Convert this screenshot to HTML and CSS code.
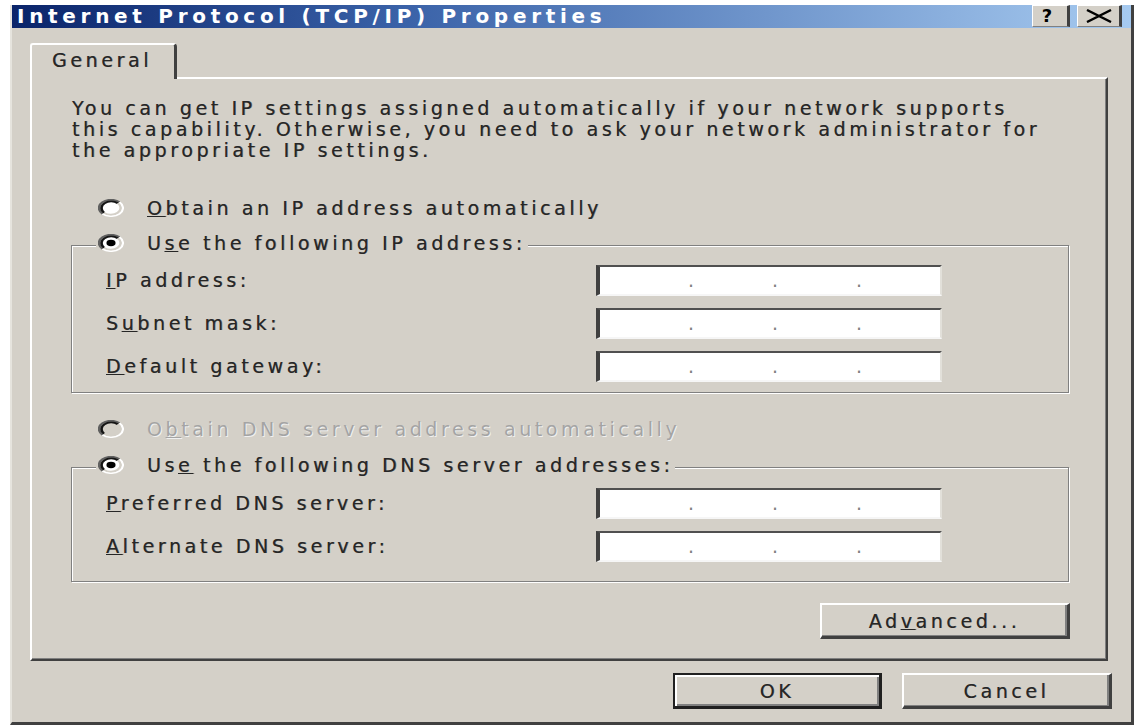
FILE: index.html
```html
<!DOCTYPE html>
<html lang="en">
<head>
<meta charset="utf-8">
<title>Internet Protocol (TCP/IP) Properties</title>
<link rel="stylesheet" href="styles.css">
</head>
<body>
<div class="window">
  <div class="titlebar">
    <span class="title">Internet Protocol (TCP/IP) Properties</span>
    <div class="tb-buttons">
      <span class="tb-btn help">?</span>
      <span class="tb-btn close">
        <svg class="close-x" viewBox="0 0 28 14" width="28" height="14"><path d="M2 1 L26 13 M26 1 L2 13" stroke="#000" stroke-width="2.4" fill="none"/></svg>
      </span>
    </div>
  </div>
  <div class="client">
    <div class="tabs"><div class="tab">General</div></div>
    <div class="panel">
      <p class="desc">You can get IP settings assigned automatically if your network supports<br>this capability. Otherwise, you need to ask your network administrator for<br>the appropriate IP settings.</p>

      <div class="radio-row first">
        <svg class="radio" viewBox="0 0 12 12" preserveAspectRatio="none"><circle cx="6" cy="6" r="4.5" fill="#fff"/><path d="M2.1 9.9A5.5 5.5 0 0 1 9.9 2.1" fill="none" stroke="#606060" stroke-width="1.2"/><path d="M2.82 9.18A4.5 4.5 0 0 1 9.18 2.82" fill="none" stroke="#151515" stroke-width="1.2"/><path d="M9.9 2.1A5.5 5.5 0 0 1 2.1 9.9" fill="none" stroke="#fff"/><path d="M9.18 2.82A4.5 4.5 0 0 1 2.82 9.18" fill="none" stroke="#d4d0c8"/></svg>
        <span><u>O</u>btain an IP address automatically</span>
      </div>

      <div class="group g1">
        <div class="group-head radio-row">
          <svg class="radio" viewBox="0 0 12 12" preserveAspectRatio="none"><circle cx="6" cy="6" r="4.5" fill="#fff"/><path d="M2.1 9.9A5.5 5.5 0 0 1 9.9 2.1" fill="none" stroke="#606060" stroke-width="1.2"/><path d="M2.82 9.18A4.5 4.5 0 0 1 9.18 2.82" fill="none" stroke="#151515" stroke-width="1.2"/><path d="M9.9 2.1A5.5 5.5 0 0 1 2.1 9.9" fill="none" stroke="#fff"/><path d="M9.18 2.82A4.5 4.5 0 0 1 2.82 9.18" fill="none" stroke="#d4d0c8"/><circle cx="6" cy="6" r="2.1" fill="#000"/></svg>
          <span>U<u>s</u>e the following IP address:</span>
        </div>
        <div class="fields">
          <span class="lbl"><u>I</u>P address:</span>
          <div class="ip"><span class="oct"></span><span class="dot">.</span><span class="oct"></span><span class="dot">.</span><span class="oct"></span><span class="dot">.</span><span class="oct"></span></div>
          <span class="lbl">S<u>u</u>bnet mask:</span>
          <div class="ip"><span class="oct"></span><span class="dot">.</span><span class="oct"></span><span class="dot">.</span><span class="oct"></span><span class="dot">.</span><span class="oct"></span></div>
          <span class="lbl"><u>D</u>efault gateway:</span>
          <div class="ip"><span class="oct"></span><span class="dot">.</span><span class="oct"></span><span class="dot">.</span><span class="oct"></span><span class="dot">.</span><span class="oct"></span></div>
        </div>
      </div>

      <div class="radio-row dns-auto disabled">
        <svg class="radio" viewBox="0 0 12 12" preserveAspectRatio="none"><circle cx="6" cy="6" r="4.5" fill="#d4d0c8"/><path d="M2.1 9.9A5.5 5.5 0 0 1 9.9 2.1" fill="none" stroke="#606060" stroke-width="1.2"/><path d="M2.82 9.18A4.5 4.5 0 0 1 9.18 2.82" fill="none" stroke="#151515" stroke-width="1.2"/><path d="M9.9 2.1A5.5 5.5 0 0 1 2.1 9.9" fill="none" stroke="#fff"/><path d="M9.18 2.82A4.5 4.5 0 0 1 2.82 9.18" fill="none" stroke="#d4d0c8"/></svg>
        <span>O<u>b</u>tain DNS server address automatically</span>
      </div>

      <div class="group g2">
        <div class="group-head radio-row">
          <svg class="radio" viewBox="0 0 12 12" preserveAspectRatio="none"><circle cx="6" cy="6" r="4.5" fill="#fff"/><path d="M2.1 9.9A5.5 5.5 0 0 1 9.9 2.1" fill="none" stroke="#606060" stroke-width="1.2"/><path d="M2.82 9.18A4.5 4.5 0 0 1 9.18 2.82" fill="none" stroke="#151515" stroke-width="1.2"/><path d="M9.9 2.1A5.5 5.5 0 0 1 2.1 9.9" fill="none" stroke="#fff"/><path d="M9.18 2.82A4.5 4.5 0 0 1 2.82 9.18" fill="none" stroke="#d4d0c8"/><circle cx="6" cy="6" r="2.1" fill="#000"/></svg>
          <span>Us<u>e</u> the following DNS server addresses:</span>
        </div>
        <div class="fields">
          <span class="lbl"><u>P</u>referred DNS server:</span>
          <div class="ip"><span class="oct"></span><span class="dot">.</span><span class="oct"></span><span class="dot">.</span><span class="oct"></span><span class="dot">.</span><span class="oct"></span></div>
          <span class="lbl"><u>A</u>lternate DNS server:</span>
          <div class="ip"><span class="oct"></span><span class="dot">.</span><span class="oct"></span><span class="dot">.</span><span class="oct"></span><span class="dot">.</span><span class="oct"></span></div>
        </div>
      </div>

      <div class="adv-row"><button class="btn adv" type="button">Ad<u>v</u>anced...</button></div>
    </div>
    <div class="dlg-buttons">
      <button class="btn ok" type="button">OK</button>
      <button class="btn cancel" type="button">Cancel</button>
    </div>
  </div>
</div>
</body>
</html>
```

FILE: styles.css
```css
body {
  margin: 0;
  background: #ffffff;
  font-family: "DejaVu Sans", "Liberation Sans", sans-serif;
}

.window {
  box-sizing: border-box;
  width: 1124px;
  height: 720px;
  margin: 5px 0 0 10px;
  background: #d4d0c8;
  border-left: 2px solid #e6e4de;
  border-right: 3px solid #404040;
  border-bottom: 3px solid #404040;
  display: flex;
  flex-direction: column;
}

.titlebar {
  height: 23px;
  flex: none;
  display: flex;
  justify-content: space-between;
  align-items: flex-start;
  padding: 0 9px 0 5px;
  background: linear-gradient(to right, #0a246a 0%, #3a62a8 35%, #a6caf0 100%);
}

.title {
  color: #ffffff;
  font-weight: bold;
  font-size: 20px;
  letter-spacing: 4.7px;
  line-height: 23px;
  white-space: nowrap;
}

.tb-buttons {
  display: flex;
  gap: 7px;
}

.tb-btn {
  box-sizing: border-box;
  height: 22px;
  background: #d4d0c8;
  border-top: 1px solid #ffffff;
  border-left: 1px solid #ffffff;
  border-right: 3px solid #404040;
  border-bottom: 1px solid #808080;
  display: flex;
  align-items: center;
  justify-content: center;
  color: #000;
}

.help {
  width: 38px;
  font-weight: bold;
  font-size: 18px;
  line-height: 20px;
  padding-right: 6px;
}

.close {
  width: 45px;
}

.close-x {
  display: block;
}

.client {
  flex: 1;
  display: flex;
  flex-direction: column;
  padding: 15px 19px 0 18px;
  font-size: 19px;
  letter-spacing: 3.6px;
  color: #262626;
  text-shadow: 0.6px 0 0 rgba(38, 38, 38, 0.55);
}

.tabs {
  display: flex;
  position: relative;
  z-index: 1;
  margin-bottom: -2px;
}

.tab {
  box-sizing: border-box;
  width: 147px;
  height: 36px;
  padding-left: 20px;
  line-height: 30px;
  background: #d4d0c8;
  border-top: 2px solid #ffffff;
  border-left: 2px solid #ffffff;
  border-right: 3px solid #404040;
  border-radius: 3px 4px 0 0;
}

.panel {
  box-sizing: border-box;
  width: 1078px;
  height: 584px;
  padding-top: 19px;
  border-top: 2px solid #ffffff;
  border-left: 2px solid #ffffff;
  border-right: 2px solid #404040;
  border-bottom: 2px solid #404040;
  box-shadow: inset -1px -1px 0 #808080;
  display: flex;
  flex-direction: column;
}

.desc {
  margin: 0 0 0 40px;
  line-height: 21px;
  white-space: nowrap;
}

.radio-row {
  display: flex;
  align-items: center;
  height: 22px;
  gap: 23px;
  white-space: nowrap;
}

.radio {
  flex: none;
  width: 26px;
  height: 18px;
  display: block;
}

.first {
  margin: 36px 0 0 66px;
}

.dns-auto {
  margin: 25px 0 0 66px;
}

.disabled {
  color: #a4a4a4;
  text-shadow: 1px 1px 0 #f0f0f0;
}

.group {
  margin: 26px 37px 0 39px;
  padding: 0 0 10px 34px;
  border: 1px solid #808080;
  box-shadow: inset 1px 1px 0 #ffffff, 1px 1px 0 #ffffff;
}

.g2 {
  margin-top: 27px;
  padding-bottom: 19px;
}

.group-head {
  width: fit-content;
  margin: -14px 0 0 -10px;
  padding: 0 2px;
  background: #d4d0c8;
}

.fields {
  display: grid;
  grid-template-columns: 490px 346px;
  grid-auto-rows: 31px;
  row-gap: 12px;
  align-items: center;
  margin-top: 11px;
}

.g2 .fields {
  margin-top: 12px;
}

.lbl {
  white-space: nowrap;
  line-height: 22px;
  margin-top: -2px;
}

.ip {
  box-sizing: border-box;
  width: 346px;
  height: 31px;
  display: flex;
  align-items: center;
  padding-left: 8px;
  background: #ffffff;
  border-top: 2px solid #505050;
  border-left: 4px solid #404040;
  border-right: 2px solid #e2e0da;
  border-bottom: 2px solid #f6f6f6;
  line-height: 27px;
  text-shadow: none;
}

.oct {
  width: 80px;
  flex: none;
}

.dot {
  width: 4px;
  flex: none;
  letter-spacing: 0;
  color: #808080;
  text-align: center;
}

.adv-row {
  display: flex;
  justify-content: flex-end;
  margin: 21px 36px 0 0;
}

.btn {
  box-sizing: border-box;
  height: 36px;
  padding: 0;
  font: inherit;
  letter-spacing: inherit;
  color: #262626;
  text-shadow: inherit;
  background: #d4d0c8;
  border-style: solid;
  border-width: 2px 3px 3px 2px;
  border-color: #ffffff #404040 #404040 #ffffff;
  box-shadow: inset -2px -1px 0 #808080;
}

.adv {
  width: 250px;
}

.dlg-buttons {
  display: flex;
  justify-content: flex-end;
  gap: 20px;
  margin-top: 12px;
}

.ok {
  width: 209px;
  border-width: 2px 3px 3px 2px;
  border-color: #202020;
  box-shadow: inset 2px 2px 0 #ffffff, inset -2px -2px 0 #808080;
}

.cancel {
  width: 210px;
}
```
